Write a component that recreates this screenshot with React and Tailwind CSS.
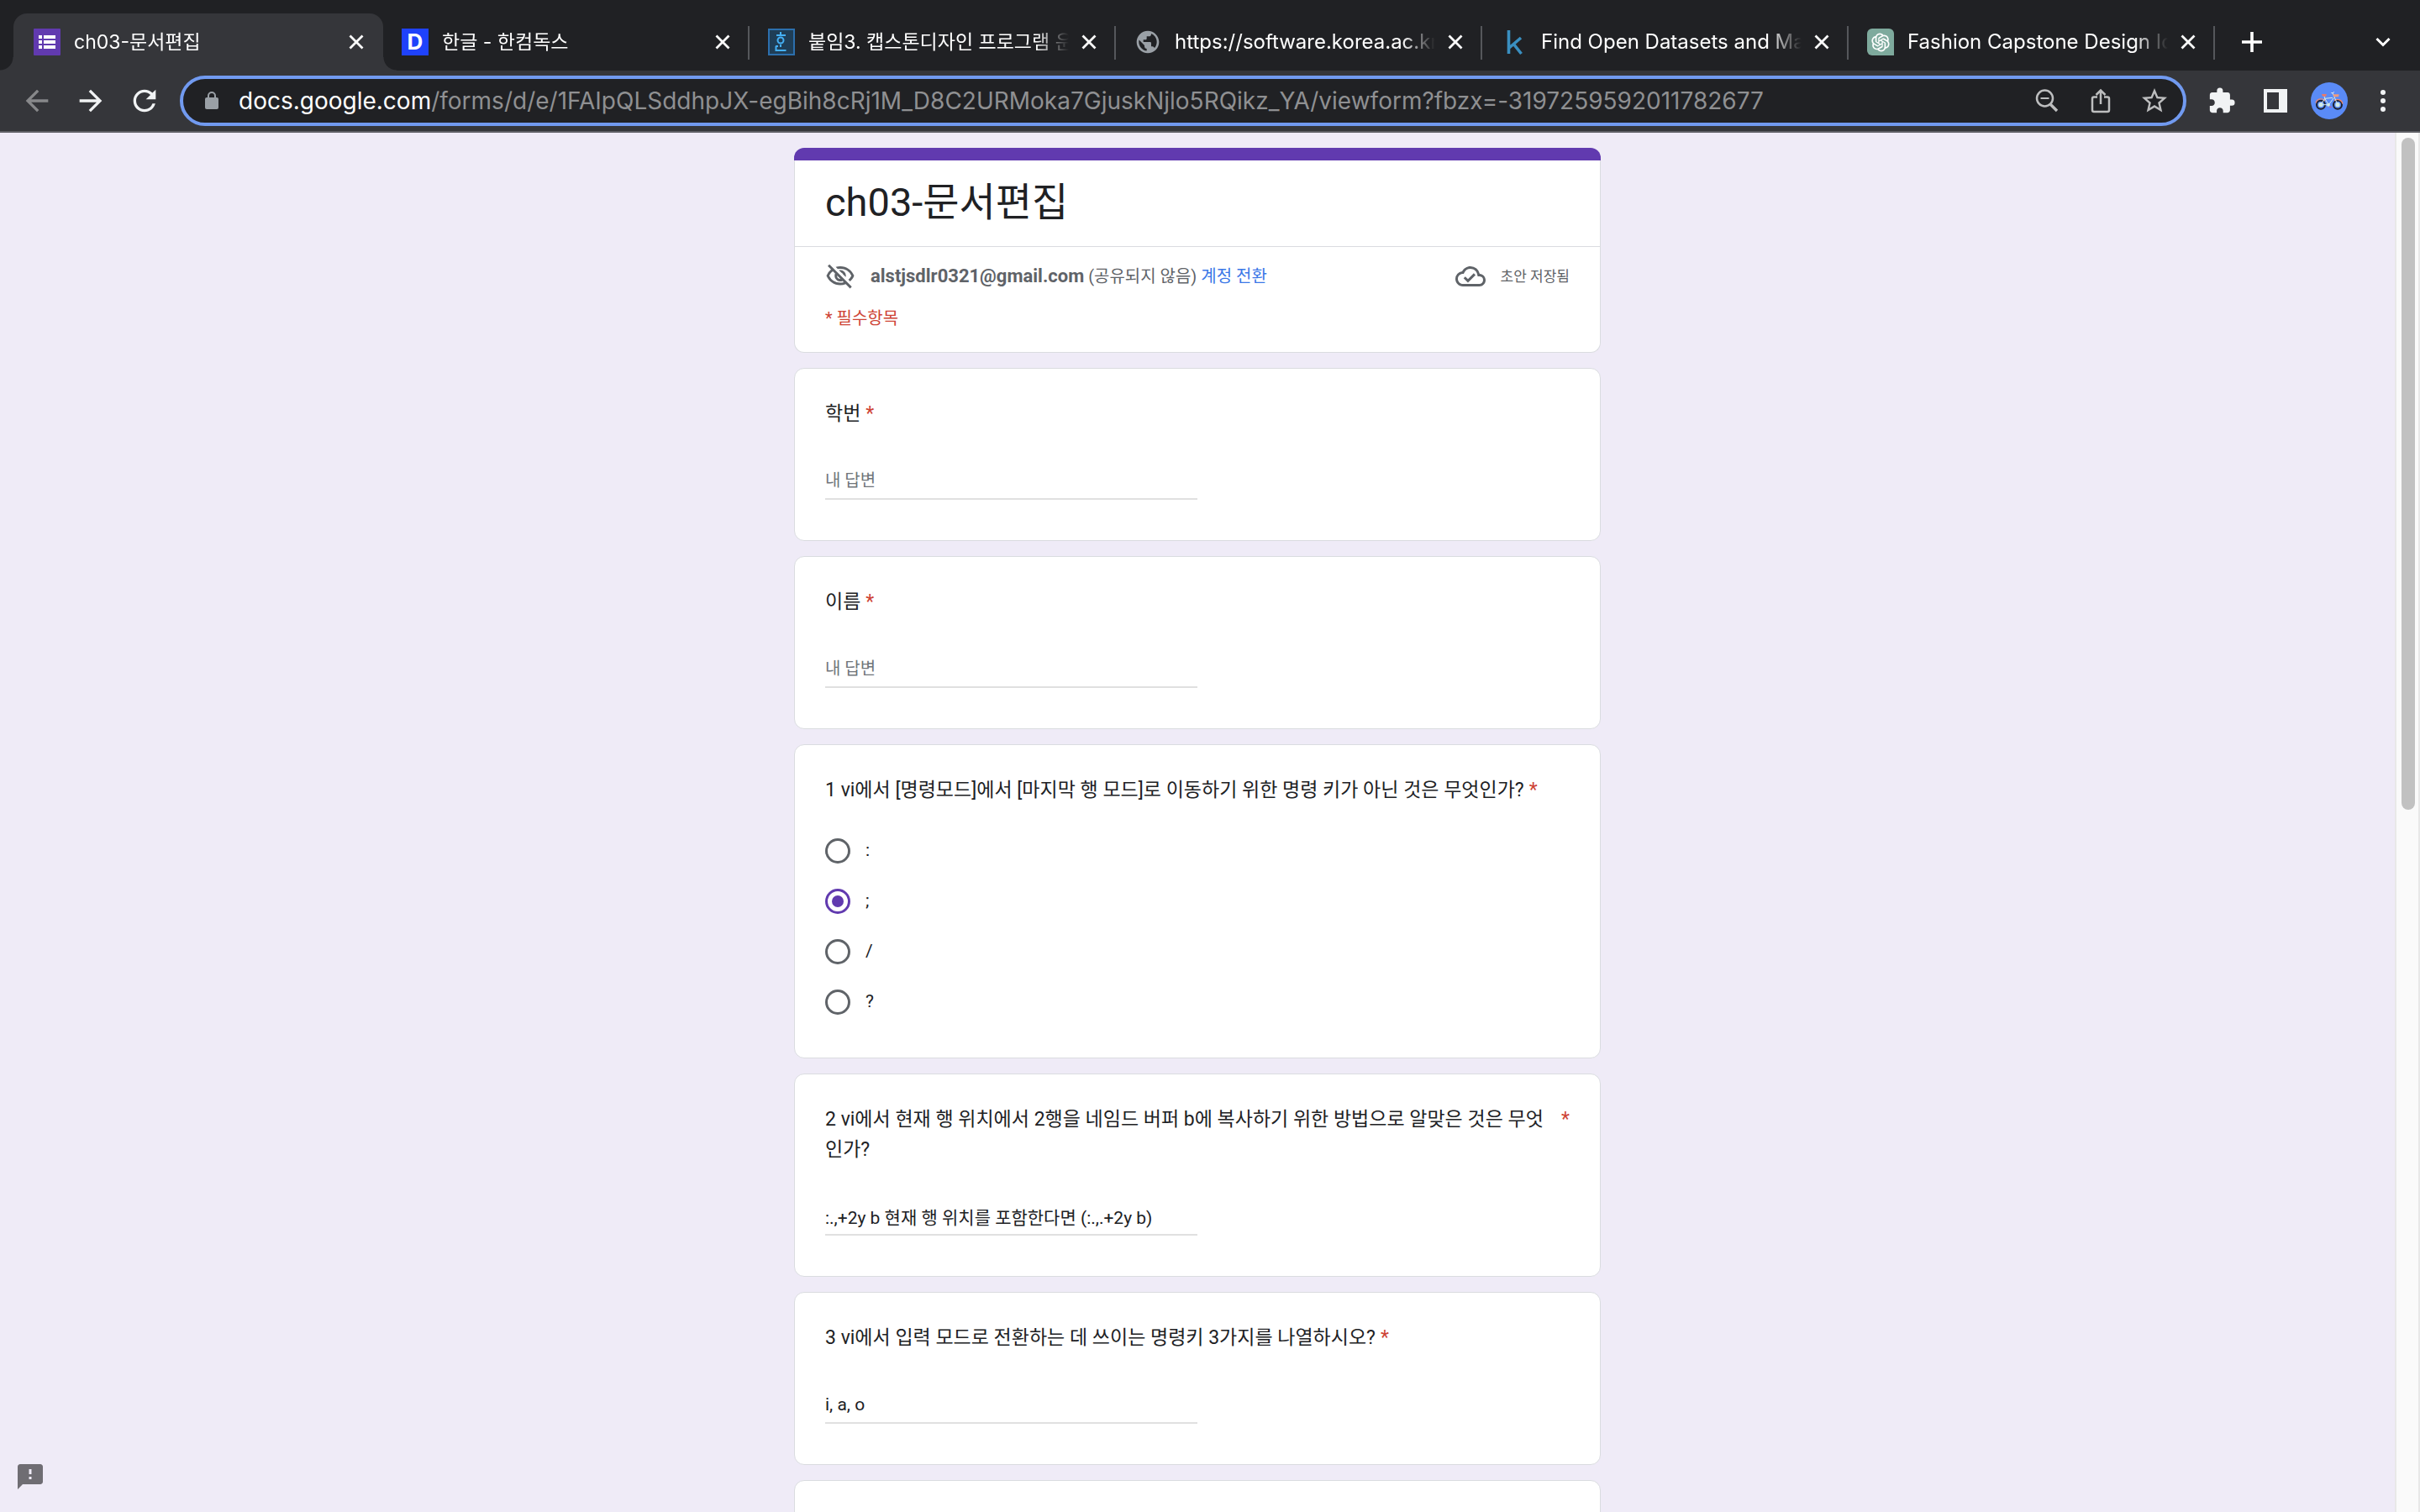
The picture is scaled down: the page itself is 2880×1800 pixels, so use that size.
import { useState } from "react";
import clsx from "clsx";
import {
  MdArrowBack,
  MdArrowForward,
  MdExtension,
  MdFeedback,
  MdOutlineCloudDone,
  MdOutlineVisibilityOff,
  MdPublic,
  MdRefresh,
  MdStarBorder,
} from "react-icons/md";
import { AiOutlineOpenAI } from "react-icons/ai";

function FormsIcon() {
  return (
    <svg viewBox="0 0 32 32" className="size-8">
      <rect width="32" height="32" rx="1" fill="#613aaf" />
      <path
        fill="#fff"
        d="M6 8h4v4H6zM12 8h14v4H12zM6 14h4v4H6zM12 14h14v4H12zM6 20h4v4H6zM12 20h14v4H12z"
      />
    </svg>
  );
}

function DocsIcon() {
  return (
    <span className="flex size-8 items-center justify-center bg-[#1f42fb] font-[Inter] text-[26px] leading-8 font-bold text-white">
      D
    </span>
  );
}

function HwpIcon() {
  return (
    <svg viewBox="0 0 32 32" className="size-8">
      <rect x="1" y="1" width="30" height="30" fill="#1f3e57" stroke="#2c6fad" strokeWidth="2" />
      <g fill="none" stroke="#45b0f5" strokeWidth="2">
        <path d="M15 4v4M10 8h11M9.500 21v5h12M15 19v3M9 21h3" />
        <circle cx="15" cy="14" r="3.500" />
      </g>
    </svg>
  );
}

function KaggleIcon() {
  return (
    <svg viewBox="0 0 32 32" className="size-8">
      <path d="M9.500 2v28M24 11 10 23M15 18l9.500 12" fill="none" stroke="#3a8fc0" strokeWidth="3.600" />
    </svg>
  );
}

function ChatIcon() {
  return (
    <span className="flex size-8 items-center justify-center rounded-md rounded-br-none bg-[#7eaa9d]">
      <AiOutlineOpenAI className="size-7 text-white" />
    </span>
  );
}

function GlobeIcon() {
  return <MdPublic className="size-8 text-[#9aa0a6]" />;
}

const TABS = [
  { title: "ch03-문서편집", Icon: FormsIcon, korean: true },
  { title: "한글 - 한컴독스", Icon: DocsIcon, korean: true },
  { title: "붙임3. 캡스톤디자인 프로그램 운", Icon: HwpIcon, korean: true },
  { title: "https://software.korea.ac.kr", Icon: GlobeIcon },
  { title: "Find Open Datasets and Ma", Icon: KaggleIcon },
  { title: "Fashion Capstone Design Id", Icon: ChatIcon },
];

const QUESTIONS = [
  { id: "studentId", title: "학번", type: "text", answer: "" },
  { id: "name", title: "이름", type: "text", answer: "" },
  {
    id: "q1",
    title: "1 vi에서 [명령모드]에서 [마지막 행 모드]로 이동하기 위한 명령 키가 아닌 것은 무엇인가?",
    type: "radio",
    options: [":", ";", "/", "?"],
    answer: ";",
  },
  {
    id: "q2",
    title: "2 vi에서 현재 행 위치에서 2행을 네임드 버퍼 b에 복사하기 위한 방법으로 알맞은 것은 무엇인가?",
    type: "text",
    answer: ":.,+2y b 현재 행 위치를 포함한다면 (:.,.+2y b)",
  },
  {
    id: "q3",
    title: "3 vi에서 입력 모드로 전환하는 데 쓰이는 명령키 3가지를 나열하시오?",
    type: "text",
    answer: "i, a, o",
  },
];

function Tab({ title, Icon, korean, active }) {
  return (
    <div
      className={clsx(
        "relative flex h-[68px] min-w-0 items-center",
        active ? "w-[440px] rounded-t-2xl bg-[#35363a] pr-4 pl-6" : "w-[436px] pr-4 pl-[22px]"
      )}
    >
      {active ? (
        <>
          <span className="absolute bottom-0 -left-4 size-4 bg-[radial-gradient(circle_at_0_0,transparent_15px,#35363a_16px)]" />
          <span className="absolute -right-4 bottom-0 size-4 bg-[radial-gradient(circle_at_100%_0,transparent_15px,#35363a_16px)]" />
        </>
      ) : (
        <span className="absolute top-[15px] right-0 h-10 w-0.5 bg-[#55575b]" />
      )}
      <span className="shrink-0">
        <Icon />
      </span>
      <span
        className={clsx(
          "ml-4 min-w-0 flex-1 overflow-hidden leading-8 whitespace-nowrap text-white [mask-image:linear-gradient(to_right,black_calc(100%-40px),transparent)]",
          korean ? "text-[23px]" : "text-[24px]"
        )}
      >
        {title}
      </span>
      <button type="button" aria-label="Close tab" className="ml-2 flex size-8 shrink-0 items-center justify-center">
        <svg viewBox="0 0 18 18" className="size-[18px]">
          <path d="M1.500 1.500l15 15M16.500 1.500l-15 15" stroke="#fff" strokeWidth="2.800" />
        </svg>
      </button>
    </div>
  );
}

function TabStrip() {
  return (
    <div className="flex h-[84px] items-end bg-[#202124] pr-5 pl-4">
      {TABS.map((tab, i) => (
        <Tab key={tab.title} {...tab} active={i === 0} />
      ))}
      <button type="button" aria-label="New tab" className="ml-5 flex h-[68px] w-12 items-center justify-center">
        <svg viewBox="0 0 24 24" className="size-6">
          <path d="M12 0v24M0 12h24" stroke="#fff" strokeWidth="3.600" />
        </svg>
      </button>
      <button type="button" aria-label="Search tabs" className="ml-auto flex h-[68px] w-12 items-center justify-center">
        <svg viewBox="0 0 18 12" className="h-3 w-[18px]">
          <path d="M1.500 2 9 9.500 16.500 2" fill="none" stroke="#fff" strokeWidth="3" />
        </svg>
      </button>
    </div>
  );
}

function BarButton({ label, children }) {
  return (
    <button type="button" aria-label={label} className="flex h-12 w-16 shrink-0 items-center justify-center">
      {children}
    </button>
  );
}

function BikeAvatar() {
  return (
    <svg viewBox="0 0 132 132" className="size-11">
      <circle cx="66" cy="66" r="66" fill="#5a8bf7" />
      <g fill="none">
        <circle cx="36" cy="80" r="15" stroke="#1d2230" strokeWidth="6" />
        <circle cx="96" cy="80" r="15" stroke="#1d2230" strokeWidth="6" />
        <path d="M18 74a19 19 0 0 1 33-8" stroke="#f0876a" strokeWidth="3.500" />
        <path d="M84 65a19 19 0 0 1 30 12" stroke="#f0876a" strokeWidth="3.500" />
        <path d="M36 80 50 58 78 55M50 58l14 22M64 80l18-24M78 38l18 42M36 80h28" stroke="#d5ebe9" strokeWidth="3" />
        <path d="M48 50l3 9" stroke="#d5ebe9" strokeWidth="3" />
        <path d="M73 38h6l5-4" stroke="#e6e9ef" strokeWidth="3" />
      </g>
      <circle cx="36" cy="80" r="8" fill="#cfe9e4" />
      <circle cx="96" cy="80" r="8" fill="#cfe9e4" />
      <circle cx="63" cy="80" r="6" fill="#cfe9e4" />
      <path d="M39 42h18l-3 8h-12z" fill="#e8796a" />
      <path d="M80 43h21l-2 9H82z" fill="#f09a7c" />
      <path d="M66 88h8" stroke="#d9548a" strokeWidth="3" />
    </svg>
  );
}

function Toolbar() {
  return (
    <div className="flex h-[74px] items-center border-b-2 border-[#5f5f65] bg-[#35363a] px-3">
      <BarButton label="Back">
        <MdArrowBack className="size-10 text-[#87888a]" />
      </BarButton>
      <BarButton label="Forward">
        <MdArrowForward className="size-10 text-[#f1f3f4]" />
      </BarButton>
      <BarButton label="Reload">
        <MdRefresh className="size-10 text-[#f1f3f4]" />
      </BarButton>

      <div className="mx-2.5 flex h-[60px] min-w-0 flex-1 items-center rounded-full border-4 border-[#719af0] bg-[#202124] pr-0.5 pl-[22px]">
        <svg viewBox="0 0 24 24" className="size-6 shrink-0">
          <path d="M8 10V6a4 4 0 0 1 8 0v4" fill="none" stroke="#9aa0a6" strokeWidth="2" />
          <rect x="4" y="8" width="16" height="14" rx="2" fill="#9aa0a6" />
        </svg>
        <label className="ml-5 flex min-w-0 flex-1 items-center text-[28px] leading-9">
          <span className="text-white">docs.google.com</span>
          <input
            aria-label="Address"
            className="min-w-0 flex-1 bg-transparent text-[#8f9092] outline-none"
            defaultValue="/forms/d/e/1FAIpQLSddhpJX-egBih8cRj1M_D8C2URMoka7GjuskNjlo5RQikz_YA/viewform?fbzx=-3197259592011782677"
          />
        </label>
        <BarButton label="Zoom">
          <svg viewBox="0 0 32 32" className="size-8" fill="none" stroke="#bdbebf">
            <circle cx="13.500" cy="13" r="9.500" strokeWidth="2.500" />
            <path d="M8.500 13h10" strokeWidth="2" />
            <path d="M20.500 20.500 28 28" strokeWidth="3.400" />
          </svg>
        </BarButton>
        <BarButton label="Share">
          <svg viewBox="0 0 32 32" className="size-8" fill="none" stroke="#bdbebf" strokeWidth="2.500">
            <path d="M12 11.500H8a2 2 0 0 0-2 2V27a2 2 0 0 0 2 2h16a2 2 0 0 0 2-2V13.500a2 2 0 0 0-2-2h-4" />
            <path d="M16 20V4M10.500 9 16 3.500 21.500 9" />
          </svg>
        </BarButton>
        <BarButton label="Bookmark">
          <MdStarBorder className="size-9 text-[#bdbebf]" />
        </BarButton>
      </div>

      <BarButton label="Extensions">
        <MdExtension className="size-[34px] text-[#f1f3f4]" />
      </BarButton>
      <BarButton label="Side panel">
        <svg viewBox="0 0 28 28" className="size-7">
          <path fill="#f1f3f4" fillRule="evenodd" d="M0 0h28v28H0zM4 4v20h14V4z" />
        </svg>
      </BarButton>
      <BarButton label="Profile">
        <BikeAvatar />
      </BarButton>
      <BarButton label="Menu">
        <svg viewBox="0 0 6 26" className="h-[26px] w-1.5" fill="#f1f3f4">
          <circle cx="3" cy="3" r="3" />
          <circle cx="3" cy="13" r="3" />
          <circle cx="3" cy="23" r="3" />
        </svg>
      </BarButton>
    </div>
  );
}

function FormHeader() {
  return (
    <header className="flex flex-col">
      <div className="h-[15px] rounded-t-xl bg-[#613aaf]" />
      <div className="rounded-b-xl border border-t-0 border-[#dadce0] bg-white">
        <h1 className="border-b border-[#dadce0] px-9 pt-5 pb-[22px] text-[47px] leading-[60px] text-[#202124]">
          ch03-문서편집
        </h1>
        <div className="flex items-center px-9 pt-[17px] text-[20px] leading-9 text-[#5f6368]">
          <MdOutlineVisibilityOff className="size-9 shrink-0" />
          <p className="ml-[18px] flex-1">
            <b className="text-[22px]">alstjsdlr0321@gmail.com</b> (공유되지 않음){" "}
            <a href="#switch" className="text-[#3b78e7]">
              계정 전환
            </a>
          </p>
          <MdOutlineCloudDone className="size-9" />
          <span className="ml-[18px] text-[17px] leading-9">초안 저장됨</span>
        </div>
        <p className="px-9 pt-3.5 pb-[22px] text-[20px] leading-9 text-[#ce4335]">* 필수항목</p>
      </div>
    </header>
  );
}

function Question({ question }) {
  const { id, title, type, options, answer } = question;
  const [value, setValue] = useState(answer);
  const isText = type === "text";

  return (
    <section
      className={clsx(
        "rounded-xl border border-[#dadce0] bg-white px-9 pt-9",
        isText ? "pb-12" : "pb-9"
      )}
    >
      <div className="flex gap-1.5 text-[23px] leading-9 text-[#202124]">
        {isText ? (
          <label htmlFor={id} className="break-all">
            {title}
          </label>
        ) : (
          <h2 id={id}>{title}</h2>
        )}
        <span className="shrink-0 text-[#ce4335]">*</span>
      </div>

      {isText ? (
        <input
          id={id}
          type="text"
          value={value}
          placeholder="내 답변"
          onChange={(e) => setValue(e.target.value)}
          className="mt-11 block h-10 w-1/2 border-b-2 border-[#e0e0e0] pb-1 text-[21px] text-[#202124] outline-none placeholder:text-[20px] placeholder:text-[#70757a]"
        />
      ) : (
        <div role="radiogroup" aria-labelledby={id} className="mt-6">
          {options.map((option) => (
            <label key={option} className="flex h-[60px] items-center gap-[18px] text-[21px] text-[#202124]">
              <input
                type="radio"
                name={id}
                value={option}
                checked={value === option}
                onChange={() => setValue(option)}
                className="size-[30px] appearance-none rounded-full border-3 border-[#5f6368] p-[5px] checked:border-[#613aaf] checked:bg-[#613aaf] checked:bg-clip-content"
              />
              {option}
            </label>
          ))}
        </div>
      )}
    </section>
  );
}

export default function App() {
  return (
    <div className="flex h-screen flex-col overflow-hidden font-[Inter,'Noto_Sans_CJK_KR',sans-serif]">
      <TabStrip />
      <Toolbar />
      <div className="relative flex min-h-0 flex-1 bg-[#efebf7] font-[Roboto,'Noto_Sans_CJK_KR',sans-serif]">
        <main className="min-w-0 flex-1 overflow-hidden">
          <form className="mx-auto flex w-[960px] max-w-full flex-col gap-[18px] pt-[18px]">
            <FormHeader />
            {QUESTIONS.map((q) => (
              <Question key={q.id} question={q} />
            ))}
            <section className="h-52 rounded-xl border border-[#dadce0] bg-white" />
          </form>
        </main>
        <div className="w-[30px] shrink-0 border-x-2 border-[#e8e8e8] bg-[#fafafa] px-1.5 pt-1.5">
          <div className="h-[800px] w-4 rounded-full bg-[#c1c1c1]" />
        </div>
        <button type="button" aria-label="Report a problem" className="absolute bottom-6 left-[18px]">
          <MdFeedback className="size-9 text-[#6f6d73]" />
        </button>
      </div>
    </div>
  );
}
